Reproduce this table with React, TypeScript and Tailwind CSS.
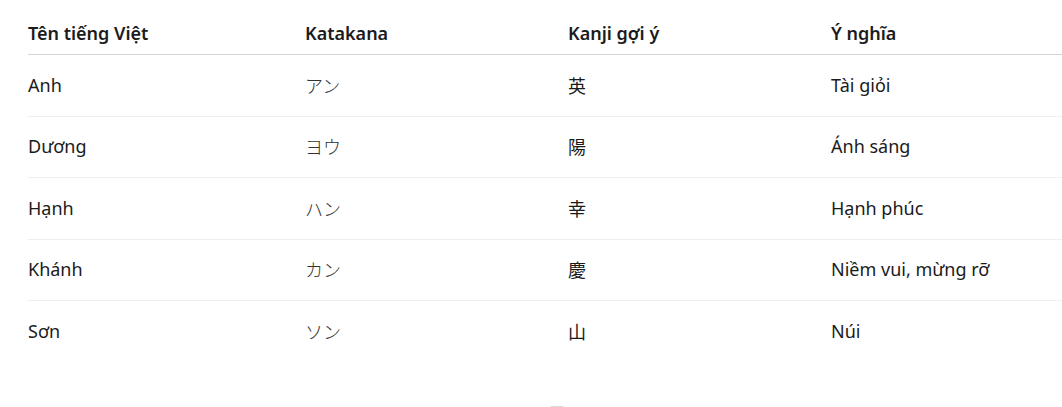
export default function App() {
  const rows = [
    { vi: "Anh", kana: "アン", kanji: "英", meaning: "Tài giỏi" },
    { vi: "Dương", kana: "ヨウ", kanji: "陽", meaning: "Ánh sáng" },
    { vi: "Hạnh", kana: "ハン", kanji: "幸", meaning: "Hạnh phúc" },
    { vi: "Khánh", kana: "カン", kanji: "慶", meaning: "Niềm vui, mừng rỡ" },
    { vi: "Sơn", kana: "ソン", kanji: "山", meaning: "Núi" },
  ];

  return (
    <div className="min-h-[407px] bg-white pl-[28px] pt-[12px] text-[#1b1b1b] font-['Noto_Sans','Noto_Sans_CJK_JP',sans-serif]">
      <table className="w-full table-fixed text-[18px] leading-[27px]">
        <colgroup>
          <col className="w-[277px]" />
          <col className="w-[263px]" />
          <col className="w-[263px]" />
          <col />
        </colgroup>
        <thead>
          <tr className="border-b border-[#d6d6d6]">
            <th className="py-[7.5px] text-left font-semibold">Tên tiếng Việt</th>
            <th className="py-[7.5px] text-left font-semibold">Katakana</th>
            <th className="py-[7.5px] text-left font-semibold">Kanji gợi ý</th>
            <th className="py-[7.5px] text-left font-semibold">Ý nghĩa</th>
          </tr>
        </thead>
        <tbody>
          {rows.map((row, i) => (
            <tr
              key={row.vi}
              className={i < rows.length - 1 ? "border-b border-[#efefef]" : ""}
            >
              <td className="py-[16.75px]">{row.vi}</td>
              <td className="py-[16.75px] font-['Noto_Sans_CJK_JP',sans-serif] font-light text-[#333]">
                {row.kana}
              </td>
              <td className="py-[16.75px] font-['Noto_Sans_CJK_JP',sans-serif]">{row.kanji}</td>
              <td className="py-[16.75px]">{row.meaning}</td>
            </tr>
          ))}
        </tbody>
      </table>
      <div className="ml-[522px] mt-[44px] h-[3px] w-[14px] rounded-full bg-[#dcdcdc]" />
    </div>
  );
}
